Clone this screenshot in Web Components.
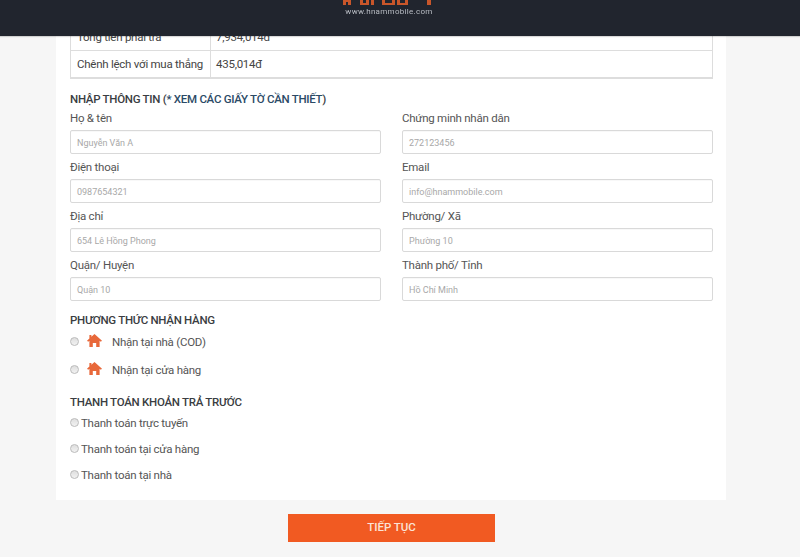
<!DOCTYPE html>
<html>
<head>
<meta charset="utf-8">
<style>
  html, body { margin: 0; height: 557px; overflow: hidden; background: #f6f6f6; }
  body { font-family: Roboto, "Noto Sans", sans-serif; color: #444; }
</style>
</head>
<body>
<site-header></site-header>
<checkout-page>
  <summary-table></summary-table>
  <section-title style="--title-top:12px">NHẬP THÔNG TIN (<span style="color:#2b4a66">* XEM CÁC GIẤY TỜ CẦN THIẾT</span>)</section-title>
  <form-grid>
    <text-field label="Họ &amp; tên" hint="Nguyễn Văn A"></text-field>
    <text-field label="Chứng minh nhân dân" hint="272123456"></text-field>
    <text-field label="Điện thoại" hint="0987654321"></text-field>
    <text-field label="Email" hint="info@hnammobile.com"></text-field>
    <text-field label="Địa chỉ" hint="654 Lê Hồng Phong"></text-field>
    <text-field label="Phường/ Xã" hint="Phường 10"></text-field>
    <text-field label="Quận/ Huyện" hint="Quận 10"></text-field>
    <text-field label="Thành phố/ Tỉnh" hint="Hồ Chí Minh"></text-field>
  </form-grid>
  <section-title style="--title-top:11px">PHƯƠNG THỨC NHẬN HÀNG</section-title>
  <radio-row icon style="--row-h:28px">Nhận tại nhà (COD)</radio-row>
  <radio-row icon style="--row-h:28px">Nhận tại cửa hàng</radio-row>
  <section-title style="--title-top:10px">THANH TOÁN KHOẢN TRẢ TRƯỚC</section-title>
  <radio-row style="--row-h:26px">Thanh toán trực tuyến</radio-row>
  <radio-row style="--row-h:26px">Thanh toán tại cửa hàng</radio-row>
  <radio-row style="--row-h:26px">Thanh toán tại nhà</radio-row>
</checkout-page>
<script>
function shadow(el, html) {
  el.attachShadow({ mode: "open" }).innerHTML = html;
}

class SiteHeader extends HTMLElement {
  connectedCallback() {
    shadow(this, `<style>
      :host { position: fixed; top: 0; left: 0; right: 0; height: 36px; z-index: 5; background: #21252e; display: block; box-shadow: 0 1px 1px rgba(0,0,0,.15); }
      svg { position: absolute; left: 343px; top: 0; filter: blur(.5px); }
      div { position: absolute; left: 344px; width: 90px; top: 6px; text-align: center; font: 8px/11px Roboto, sans-serif; letter-spacing: .3px; color: #b9bdc4; white-space: nowrap; }
    </style>
    <svg width="92" height="6" viewBox="0 0 92 6" fill="#c9562a">
      <rect x="0" y="0" width="3" height="5"/><rect x="3" y="0" width="5" height="2"/><rect x="5" y="0" width="3" height="5"/>
      <rect x="17" y="0" width="3" height="5"/><rect x="20" y="3" width="3" height="2"/><rect x="23" y="0" width="3" height="5"/><rect x="28" y="0" width="3" height="5"/>
      <rect x="39" y="0" width="3" height="5"/><rect x="42" y="3" width="7" height="2"/><rect x="49" y="0" width="3" height="5"/>
      <rect x="54" y="0" width="3" height="5"/><rect x="57" y="3" width="5" height="2"/><rect x="62" y="0" width="3" height="5"/>
      <rect x="84" y="0" width="4" height="5"/>
    </svg>
    <div>www.hnammobile.com</div>`);
  }
}

class CheckoutPage extends HTMLElement {
  connectedCallback() {
    shadow(this, `<style>
      :host { display: block; }
      .card { width: 670px; height: 500px; margin-left: 56px; padding: 0 13px 0 14px; box-sizing: border-box; background: #fff; }
      .next { width: 207px; height: 28px; margin: 14px 0 0 288px; background: #f15a22; color: #fbe3d6; font: 500 11.5px/27px Roboto, sans-serif; text-align: center; }
    </style>
    <div class="card"><slot></slot></div>
    <div class="next">TIẾP TỤC</div>`);
  }
}

class SummaryTable extends HTMLElement {
  connectedCallback() {
    shadow(this, `<style>
      :host { display: block; padding-top: 22px; }
      .t { border: 1px solid #ddd; border-bottom-width: 2px; border-top: 0; font-size: 11.5px; letter-spacing: -.25px; color: #444; }
      .r { display: grid; grid-template-columns: 139px 1fr; height: 28px; line-height: 30px; }
      .r + .r { border-top: 1px solid #ddd; height: 26px; line-height: 26px; }
      .r div { padding-left: 6px; white-space: nowrap; }
      .r div + div { border-left: 1px solid #ddd; padding-left: 5px; }
    </style>
    <div class="t">
      <div class="r"><div>Tổng tiền phải trả</div><div>7,934,014đ</div></div>
      <div class="r"><div>Chênh lệch với mua thẳng</div><div>435,014đ</div></div>
    </div>`);
  }
}

class SectionTitle extends HTMLElement {
  connectedCallback() {
    shadow(this, `<style>
      :host { display: block; padding-top: var(--title-top, 12px); font: 500 11.5px/16px Roboto, sans-serif; letter-spacing: -.28px; color: #3a3d42; }
    </style><slot></slot>`);
  }
}

class FormGrid extends HTMLElement {
  connectedCallback() {
    shadow(this, `<style>
      :host { display: grid; grid-template-columns: 311px 311px; column-gap: 21px; row-gap: 4px; padding-top: 2px; }
    </style><slot></slot>`);
  }
}

class TextField extends HTMLElement {
  connectedCallback() {
    shadow(this, `<style>
      :host { display: block; font-size: 11.5px; letter-spacing: -.25px; color: #555; }
      label { display: block; line-height: 18px; height: 18px; margin-bottom: 3px; }
      .box { height: 22px; border: 1px solid #d9d9d9; border-radius: 2px; padding-left: 6px; font-size: 9px; letter-spacing: 0; line-height: 24px; color: #a8a8a8; box-shadow: inset 0 1px 1px rgba(0,0,0,.03); }
    </style>
    <label>${this.getAttribute("label")}</label>
    <div class="box">${this.getAttribute("hint")}</div>`);
  }
}

class RadioRow extends HTMLElement {
  connectedCallback() {
    const icon = this.hasAttribute("icon") ? `<svg width="15" height="13" viewBox="0 0 15 13" fill="#e8683a"><path d="M7.5 0 L15 6.8 L13.8 7.8 L12.6 6.8 V13 H9.2 V9 H5.8 V13 H2.4 V6.8 L1.2 7.8 L0 6.8 L2.4 4.6 V1 H4.4 V2.8 Z"/></svg>` : "";
    shadow(this, `<style>
      :host { display: flex; align-items: center; height: var(--row-h, 26px); font-size: 11.5px; letter-spacing: -.25px; color: #555; }
      i { width: 7px; height: 7px; border-radius: 50%; border: 1px solid #bbb; background: linear-gradient(#dedede, #f2f2f2); margin: 0 2px 1px 0; flex: none; }
      svg { margin: -3px 10px 0 6px; }
    </style><i></i>${icon}<slot></slot>`);
  }
}

customElements.define("site-header", SiteHeader);
customElements.define("checkout-page", CheckoutPage);
customElements.define("summary-table", SummaryTable);
customElements.define("section-title", SectionTitle);
customElements.define("form-grid", FormGrid);
customElements.define("text-field", TextField);
customElements.define("radio-row", RadioRow);
</script>
</body>
</html>
